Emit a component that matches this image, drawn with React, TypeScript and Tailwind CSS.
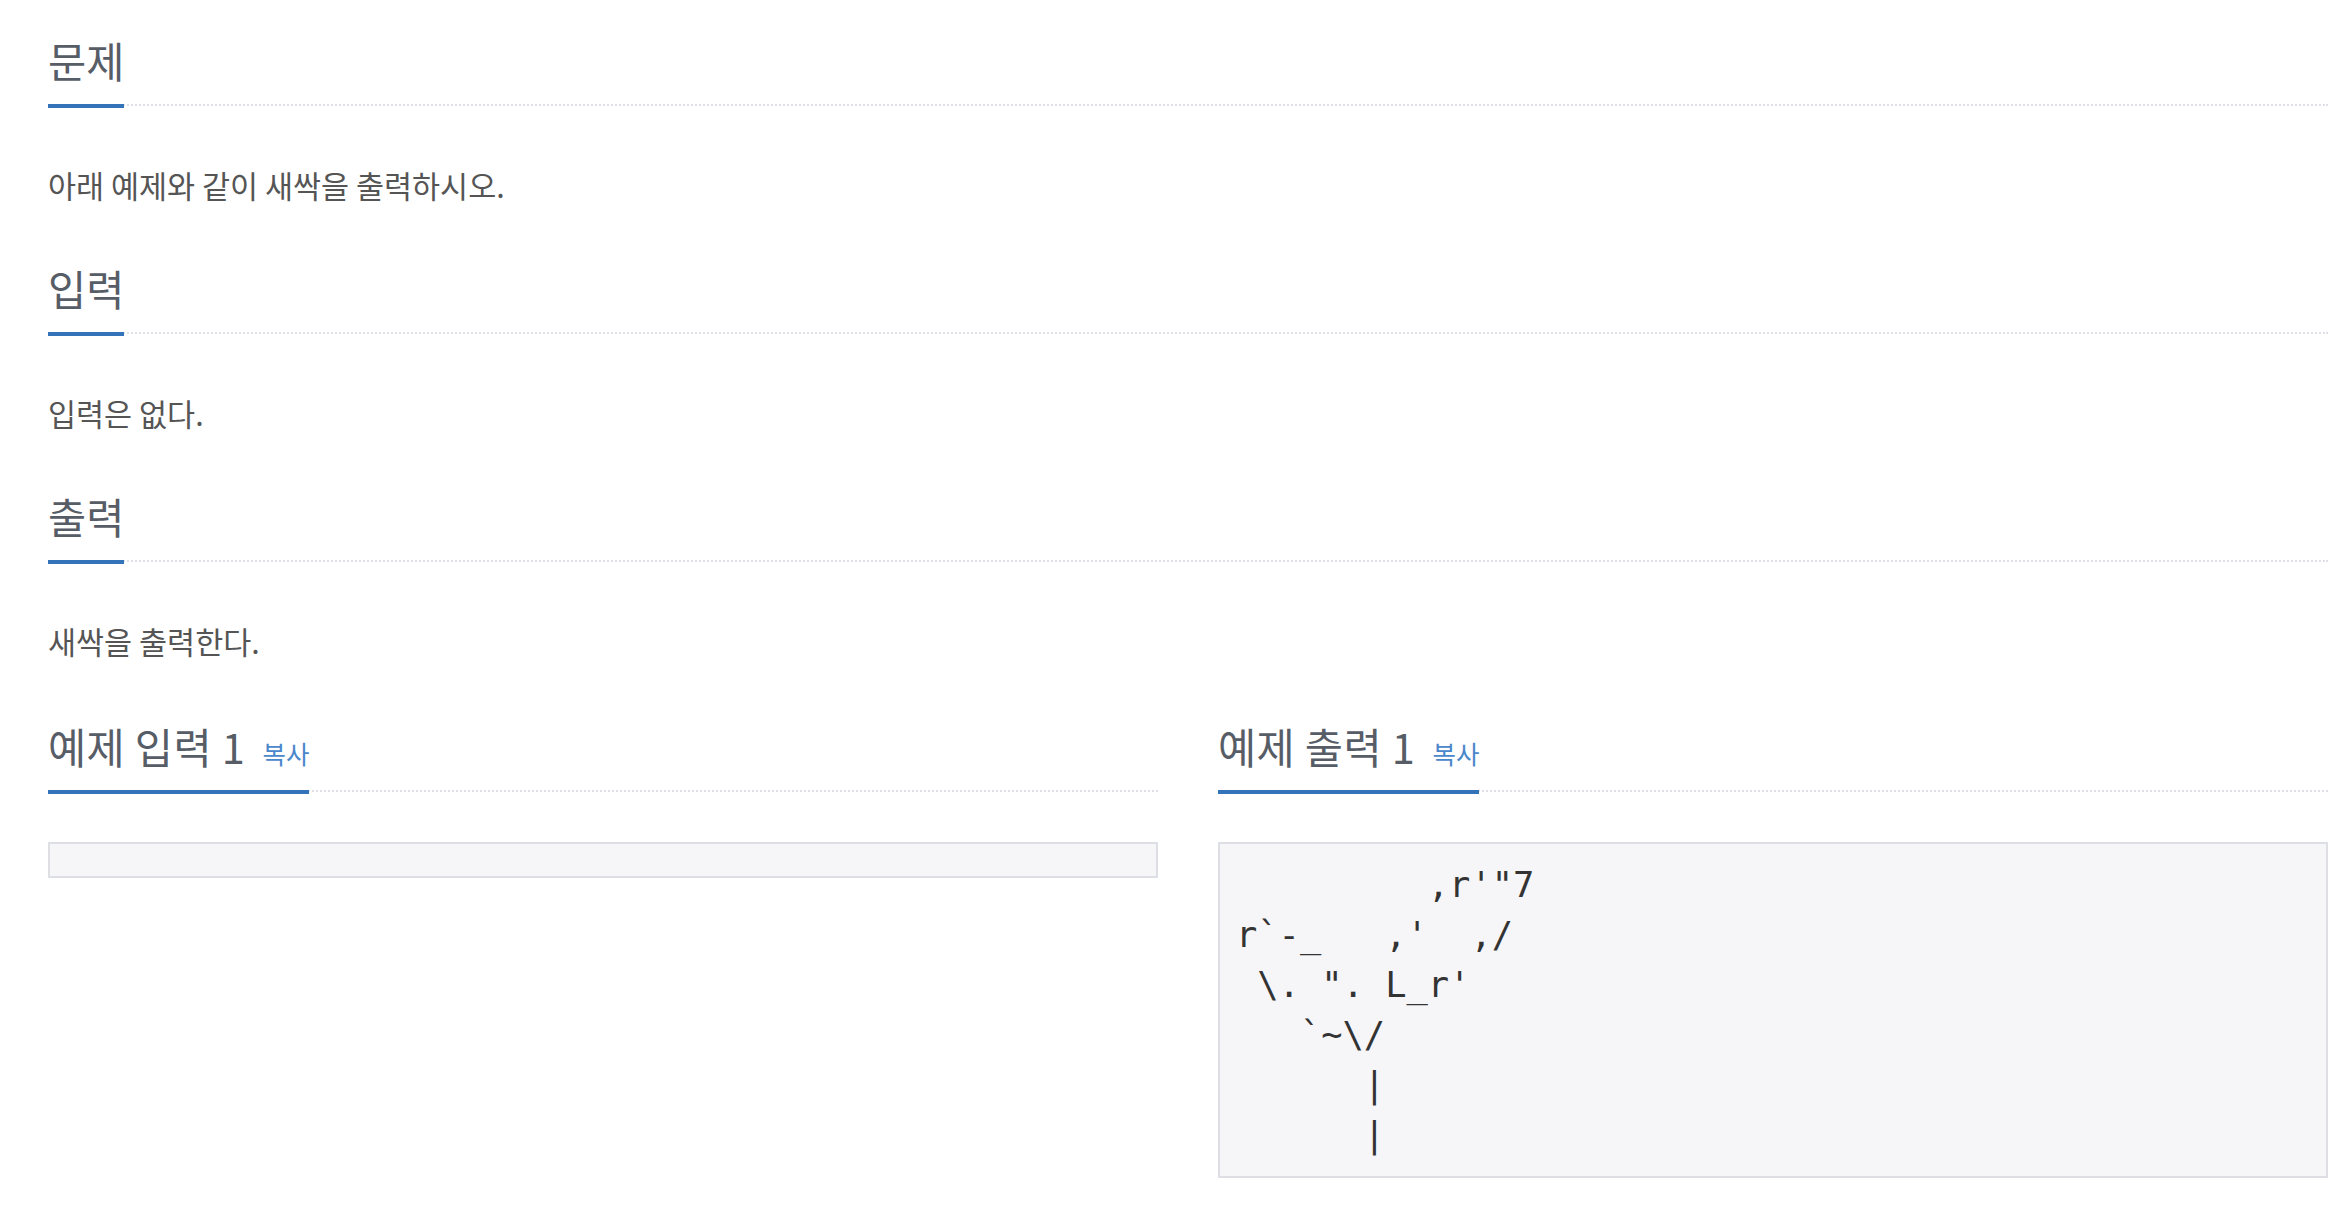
const sprout = `         ,r'"7
r\`-_   ,'  ,/
 \\. ". L_r'
   \`~\\/
      |
      |`;

function Headline({ children }: { children: React.ReactNode }) {
  return (
    <div className="flex border-b-2 border-dotted border-[#e0e0e8]">
      <h2 className="-mb-[4px] border-b-4 border-[#3273b9] pb-[22px] text-[41.5px] leading-[44px] font-normal text-[#575d67]">
        {children}
      </h2>
    </div>
  );
}

function Section({ title, text, first }: { title: string; text: string; first?: boolean }) {
  return (
    <section className={first ? "" : "mt-[60px]"}>
      <Headline>{title}</Headline>
      <p className="mt-[58px] text-[30.5px] leading-[42px] text-[#555555]">{text}</p>
    </section>
  );
}

function SampleHead({ title }: { title: string }) {
  return (
    <Headline>
      <span className="tracking-[0.4px]">{title}</span>{" "}
      <a className="ml-[8px] cursor-pointer text-[25.5px] leading-none text-[#4a87cb]">복사</a>
    </Headline>
  );
}

const preClass =
  "m-0 mt-[50px] border-2 border-[#dedee5] bg-[#f6f6f8] p-[16px] text-[35.4px] leading-[50px] text-[#333333] whitespace-pre";

export default function App() {
  return (
    <div
      className="min-h-screen bg-white pt-[38px]"
      style={{ fontFamily: '"Noto Sans CJK KR", "Open Sans", sans-serif' }}
    >
      <div className="ml-[48px] w-[2280px]">
        <Section first title="문제" text="아래 예제와 같이 새싹을 출력하시오." />
        <Section title="입력" text="입력은 없다." />
        <Section title="출력" text="새싹을 출력한다." />

        <div className="mt-[62px] grid grid-cols-2 gap-[60px]">
          <div>
            <SampleHead title="예제 입력 1" />
            <pre className={preClass} style={{ fontFamily: '"DejaVu Sans Mono", monospace' }}></pre>
          </div>
          <div>
            <SampleHead title="예제 출력 1" />
            <pre className={preClass} style={{ fontFamily: '"DejaVu Sans Mono", monospace' }}>
              {sprout}
            </pre>
          </div>
        </div>
      </div>
    </div>
  );
}
